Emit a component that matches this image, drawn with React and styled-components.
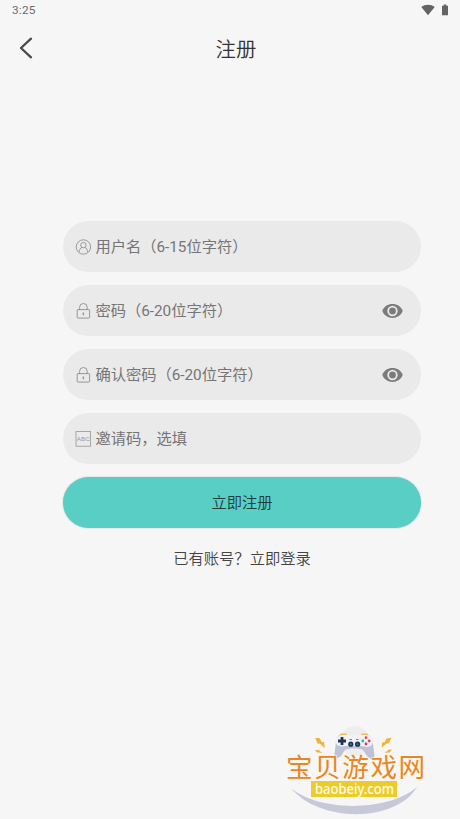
import { useState } from "react";
import styled, { createGlobalStyle } from 'styled-components';

const GlobalStyle = createGlobalStyle`
body{
    margin: 0;
    background-color: #f6f6f6;
}
*{
    box-sizing: border-box;
}
`;

const Screen = styled.div`
position: relative;
width: 100%;
height: 100vh;
overflow: hidden;
background-color: #f6f6f6;
color: #333;
font-family: Roboto, "Noto Sans CJK SC", sans-serif;
`;

const StatusBar = styled.div`
display: flex;
justify-content: space-between;
align-items: center;
height: 20px;
padding: 0 11px 0 12px;
color: #6b6b6b;
font-size: 11.8px;
letter-spacing: 0.2px;
`;

const StatusIcons = styled.div`
display: flex;
align-items: center;
gap: 6px;
`;

const Header = styled.header`
display: grid;
grid-template-columns: 52px 1fr 40px;
align-items: center;
height: 57px;
`;

const BackButton = styled.button`
display: flex;
justify-content: center;
padding: 0 0 1px;
border: none;
background: none;
cursor: pointer;
`;

const Title = styled.h1`
margin: 0;
padding-top: 2px;
text-align: center;
font-size: 20.4px;
font-weight: 350;
line-height: 30px;
`;

const Form = styled.form`
display: flex;
flex-direction: column;
gap: 13px;
padding: 144px 39px 0 63px;
`;

const Field = styled.label`
display: flex;
align-items: center;
height: 51px;
padding: 0 18px 0 12px;
border-radius: 26px;
background-color: #eaeaea;
svg{
    flex: none;
}
`;

const Input = styled.input`
flex: 1;
min-width: 0;
height: 30px;
margin-left: 4.5px;
padding: 1px 0 0;
border: none;
outline: none;
background: none;
color: #333;
font-family: inherit;
font-size: 15.3px;
letter-spacing: -0.04px;
&::placeholder{
    color: #757575;
    opacity: 1;
}
`;

const EyeButton = styled.button`
display: flex;
padding: 0;
border: none;
background: none;
cursor: pointer;
`;

const SubmitButton = styled.button`
height: 51px;
padding: 0 0 3px;
border: none;
border-radius: 26px;
background-color: #59cec5;
box-shadow: 0 0 2px rgba(0,0,0,.2);
color: #203d3b;
font-family: inherit;
font-size: 15.3px;
font-weight: 350;
cursor: pointer;
`;

const LoginLink = styled.a`
margin-top: 7px;
text-align: center;
font-size: 15.3px;
font-weight: 350;
line-height: 22px;
color: #444;
`;

const Watermark = styled.svg`
position: absolute;
right: 20px;
bottom: 0;
`;

const UserIcon = () => (
    <svg width="16" height="16" viewBox="0 0 16 16" fill="none" stroke="#8d8d8d" strokeWidth="0.85">
        <circle cx="8.4" cy="8" r="7.2" />
        <circle cx="8.4" cy="6.1" r="2.7" />
        <path d="M4.2 12.9C4.400 10.5 5.400 9 6.900 8.4M9.900 8.4C11.400 9 12.400 10.5 12.600 12.9" />
    </svg>
);

const LockIcon = () => (
    <svg width="16" height="16" viewBox="0 0 16 16" fill="none" stroke="#8d8d8d" strokeWidth="0.9">
        <rect x="2.2" y="6.6" width="12.4" height="8.5" rx="0.7" />
        <path d="M4.6 6.6V4.3a3.8 3.8 0 0 1 7.6 0V6.6" />
        <path d="M8.4 9.5v2.7" strokeWidth="1.3" />
    </svg>
);

const CodeIcon = () => (
    <svg width="16" height="16" viewBox="0 0 16 16">
        <rect x="1" y="0.6" width="14.6" height="14.6" fill="none" stroke="#969696" strokeWidth="0.8" />
        <text x="8.3" y="10.2" textAnchor="middle" textLength="13" lengthAdjust="spacingAndGlyphs" fontSize="6.2" fill="#999" fontFamily="Liberation Sans, sans-serif">ABC</text>
    </svg>
);

const EyeIcon = () => (
    <svg width="21" height="16" viewBox="0 0 21 16">
        <path d="M0.3 8C2 3.7 5.8 1.1 10.5 1.1S19 3.7 20.7 8C19 12.3 15.2 14.9 10.5 14.9S2 12.3 0.3 8Z" fill="#7b7b7b" />
        <circle cx="10.5" cy="8" r="4.3" fill="none" stroke="#eaeaea" strokeWidth="1.8" />
    </svg>
);

const Logo = () => (
    <Watermark width="160" height="99" viewBox="0 0 160 99">
        <circle cx="75" cy="21" r="15" fill="#eeeeef" />
        <path d="M11 68C39 92 108 92 137 67C116 103 39 103 11 68Z" fill="#c7c9d8" />
        <g fill="#f2b33d">
            <path d="M35.2 18l4.300 0 2.500 4.200 2-0.500 0.800 6.500-5-4.700-2 0.600z" />
            <path d="M34.8 30.500l4.200-0.800 1 1.600 2.600 1.700-4-0.600-1 0.400z" />
            <path d="M111.500 17.800l-5 0.700-2 4-2.300-0.300-0.700 5.500 5.500-4.500 1.800 0.400z" />
            <path d="M112 29.500l-4 0.300-1 1.500-2.500 1.700 4-0.600 1 0.400z" />
        </g>
        <path d="M61 14.300h5M82 14.300h5" stroke="#e9bd57" strokeWidth="1.8" strokeLinecap="round" />
        <path d="M61 15H87C91 15 92 19 93 24L94.500 36C93 40 90 39 87 36L83 30C80 28 68 28 65 30L61 36C58 39 54 38 54.500 34L56 21C57 17 58 15 61 15Z" fill="#bfc2d4" />
        <path d="M62 15H86C95 15 95 27 87 27L82 26H66C54 29 52 17 62 15Z" fill="#f0f1f7" />
        <path d="M62 17v8M58 21h8" stroke="#1f3551" strokeWidth="2.8" />
        <circle cx="70.8" cy="24.2" r="2.6" fill="#20344f" />
        <circle cx="77.6" cy="24.2" r="2.6" fill="#20344f" />
        <circle cx="70.8" cy="24.2" r="1" fill="#477b8d" />
        <circle cx="77.6" cy="24.2" r="1" fill="#477b8d" />
        <path d="M69.5 19.5h2.5M76 19.5h2.5" stroke="#e8516a" strokeWidth="1.2" />
        <circle cx="86" cy="17.7" r="1.4" fill="#e14b5e" />
        <circle cx="86" cy="24" r="1.4" fill="#d33c4e" />
        <circle cx="82.8" cy="21" r="1.4" fill="#40b1b2" />
        <circle cx="89.2" cy="21" r="1.4" fill="#db4961" />
        <text x="6" y="57" fontSize="26.5" textLength="139" fontWeight="400" fill="#e6862b" stroke="#fff6e2" strokeWidth="1.2" paintOrder="stroke" fontFamily="Noto Sans CJK SC, sans-serif">宝贝游戏网</text>
        <rect x="31" y="61" width="86" height="16" fill="#ebcc2b" />
        <text x="35" y="73.500" fontSize="14" textLength="79" lengthAdjust="spacingAndGlyphs" fontWeight="500" fill="#fffbe5" fontFamily="Noto Sans, sans-serif">baobeiy.com</text>
    </Watermark>
);

const fields = [
    { name: "username", placeholder: "用户名（6-15位字符）", icon: <UserIcon /> },
    { name: "password", placeholder: "密码（6-20位字符）", icon: <LockIcon />, secret: true },
    { name: "confirm", placeholder: "确认密码（6-20位字符）", icon: <LockIcon />, secret: true },
    { name: "invite", placeholder: "邀请码，选填", icon: <CodeIcon /> },
];

export default function App() {

    const [data, setData] = useState({
        username: "",
        password: "",
        confirm: "",
        invite: "",
    });

    const [visible, setVisible] = useState({});

    const handleChange = ({ currentTarget: input }) => {
        setData({ ...data, [input.name]: input.value });
    };

    const toggle = (name) => {
        setVisible({ ...visible, [name]: !visible[name] });
    };

    return (
        <Screen>
            <GlobalStyle />
            <StatusBar>
                <span>3:25</span>
                <StatusIcons>
                    <svg width="14" height="12" viewBox="0 0 14 12">
                        <path d="M0.3 3.1C4 0 10 0 13.7 3.1L7 11.3Z" fill="#636363" />
                    </svg>
                    <svg width="8" height="12" viewBox="0 0 8 12">
                        <path d="M2.7 0.6h2.6v1.2H7V11.3H1V1.8H2.7Z" fill="#636363" />
                    </svg>
                </StatusIcons>
            </StatusBar>
            <Header>
                <BackButton type="button">
                    <svg width="14" height="22" viewBox="0 0 14 22" fill="none" stroke="#494949" strokeWidth="2.3" strokeLinecap="round" strokeLinejoin="round">
                        <path d="M12 1.7L2 11L12 20.3" />
                    </svg>
                </BackButton>
                <Title>注册</Title>
            </Header>
            <Form onSubmit={(e) => e.preventDefault()}>
                {fields.map((field) => (
                    <Field key={field.name}>
                        {field.icon}
                        <Input
                            type={field.secret && !visible[field.name] && data[field.name] ? "password" : "text"}
                            name={field.name}
                            placeholder={field.placeholder}
                            onChange={handleChange}
                            value={data[field.name]}
                        />
                        {field.secret && (
                            <EyeButton type="button" onClick={() => toggle(field.name)}>
                                <EyeIcon />
                            </EyeButton>
                        )}
                    </Field>
                ))}
                <SubmitButton type="submit">立即注册</SubmitButton>
                <LoginLink>已有账号？立即登录</LoginLink>
            </Form>
            <Logo />
        </Screen>
    )
}
